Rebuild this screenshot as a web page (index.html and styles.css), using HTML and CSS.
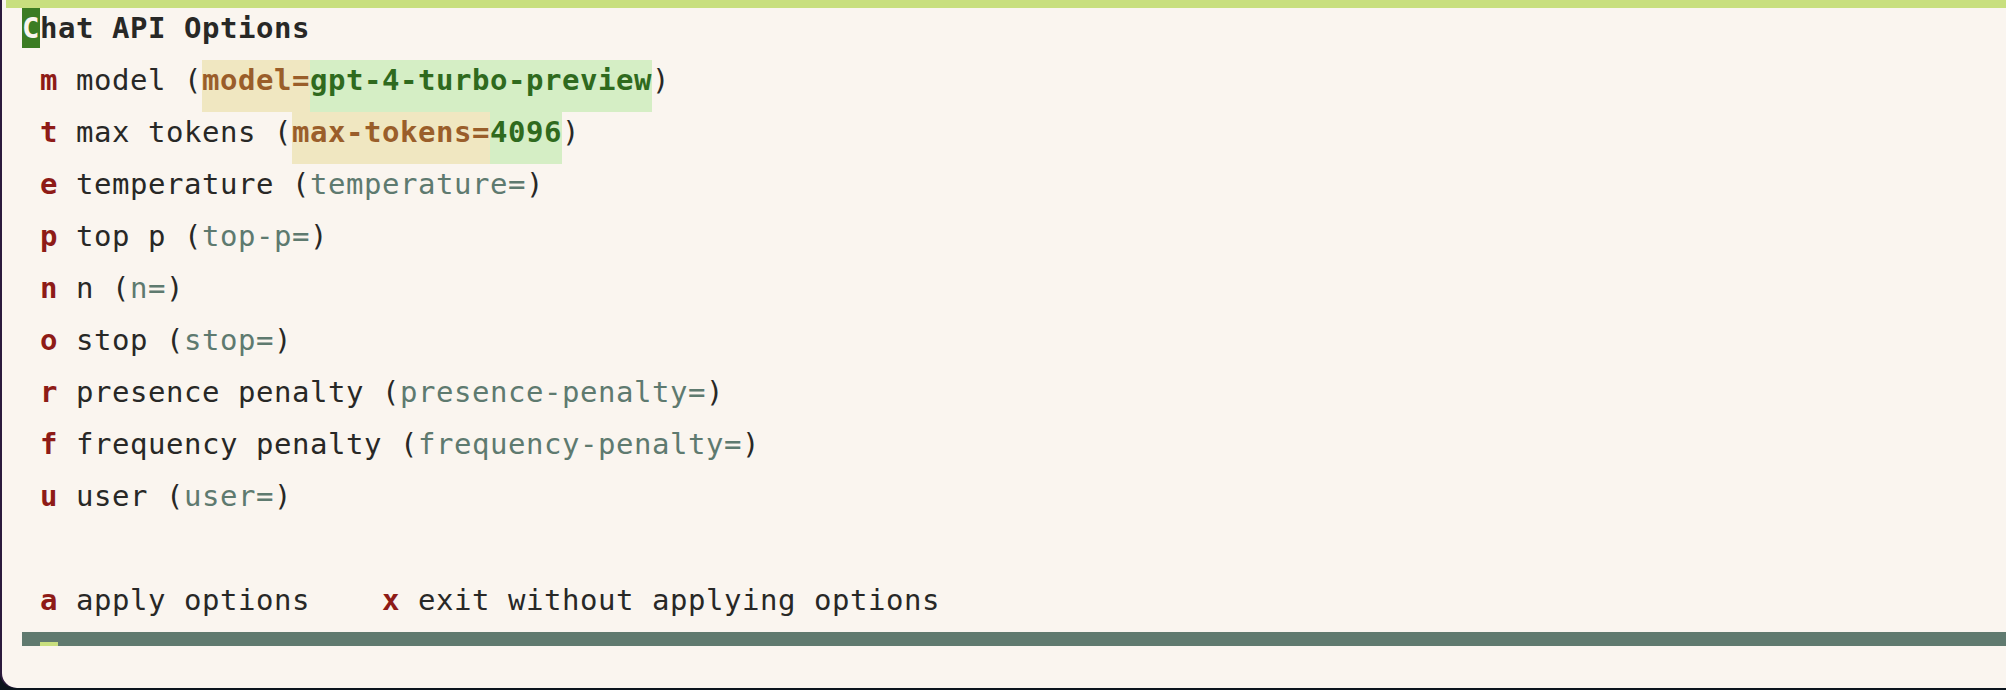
FILE: index.html
```html
<!DOCTYPE html>
<html>
<head>
<meta charset="utf-8">
<link rel="stylesheet" href="styles.css">
</head>
<body>
<div class="frame">
  <div class="tabbar"></div>
  <div class="buffer">
    <div class="line"><span class="cursor">C</span><span class="seg heading">hat API Options</span></div>
    <div class="line"><span class="seg"> </span><span class="seg key">m</span><span class="seg"> model (</span><span class="seg arg">model=</span><span class="seg val">gpt-4-turbo-preview</span><span class="seg">)</span></div>
    <div class="line"><span class="seg"> </span><span class="seg key">t</span><span class="seg"> max tokens (</span><span class="seg arg">max-tokens=</span><span class="seg val">4096</span><span class="seg">)</span></div>
    <div class="line"><span class="seg"> </span><span class="seg key">e</span><span class="seg"> temperature (</span><span class="seg unset">temperature=</span><span class="seg">)</span></div>
    <div class="line"><span class="seg"> </span><span class="seg key">p</span><span class="seg"> top p (</span><span class="seg unset">top-p=</span><span class="seg">)</span></div>
    <div class="line"><span class="seg"> </span><span class="seg key">n</span><span class="seg"> n (</span><span class="seg unset">n=</span><span class="seg">)</span></div>
    <div class="line"><span class="seg"> </span><span class="seg key">o</span><span class="seg"> stop (</span><span class="seg unset">stop=</span><span class="seg">)</span></div>
    <div class="line"><span class="seg"> </span><span class="seg key">r</span><span class="seg"> presence penalty (</span><span class="seg unset">presence-penalty=</span><span class="seg">)</span></div>
    <div class="line"><span class="seg"> </span><span class="seg key">f</span><span class="seg"> frequency penalty (</span><span class="seg unset">frequency-penalty=</span><span class="seg">)</span></div>
    <div class="line"><span class="seg"> </span><span class="seg key">u</span><span class="seg"> user (</span><span class="seg unset">user=</span><span class="seg">)</span></div>
    <div class="line"><span class="seg"> </span></div>
    <div class="line"><span class="seg"> </span><span class="seg key">a</span><span class="seg"> apply options    </span><span class="seg key">x</span><span class="seg"> exit without applying options</span></div>
  </div>
  <div class="modeline"><span class="mini-cursor"></span></div>
</div>
</body>
</html>
```

FILE: styles.css
```css
html, body {
  margin: 0;
  padding: 0;
}

body {
  width: 2006px;
  height: 690px;
  background: #0b141c;
  overflow: hidden;
}

.frame {
  margin-left: 2px;
  height: 688px;
  background: #faf5ef;
  border-bottom-left-radius: 15px;
  box-shadow: -2px 0 0 #2b1a3c;
  display: flex;
  flex-direction: column;
  overflow: hidden;
}

.tabbar {
  height: 8px;
  margin-left: 4px;
  background: #c8df7e;
  flex: none;
}

.buffer {
  padding-left: 20px;
  display: flex;
  flex-direction: column;
  font-family: "DejaVu Sans Mono", "Liberation Mono", monospace;
  font-size: 29px;
  letter-spacing: 0.54px;
  color: #282826;
}

.line {
  height: 52px;
  display: flex;
  align-items: stretch;
  white-space: pre;
}

.seg {
  line-height: 40px;
}

.cursor {
  align-self: flex-start;
  line-height: 40px;
  height: 40px;
  background: #3b7c23;
  color: #faf5ef;
  font-weight: bold;
}

.heading {
  font-weight: bold;
}

.key {
  color: #8e1b17;
  font-weight: bold;
}

.arg {
  color: #9a5e2a;
  font-weight: bold;
  background: #f0e7c1;
}

.val {
  color: #2f6a1e;
  font-weight: bold;
  background: #d5eec5;
}

.unset {
  color: #5e7a6f;
}

.modeline {
  flex: none;
  height: 14px;
  margin-left: 20px;
  background: #607a6f;
  display: flex;
  align-items: flex-end;
}

.mini-cursor {
  margin-left: 18px;
  width: 18px;
  height: 4px;
  background: #c8df7e;
}
```
